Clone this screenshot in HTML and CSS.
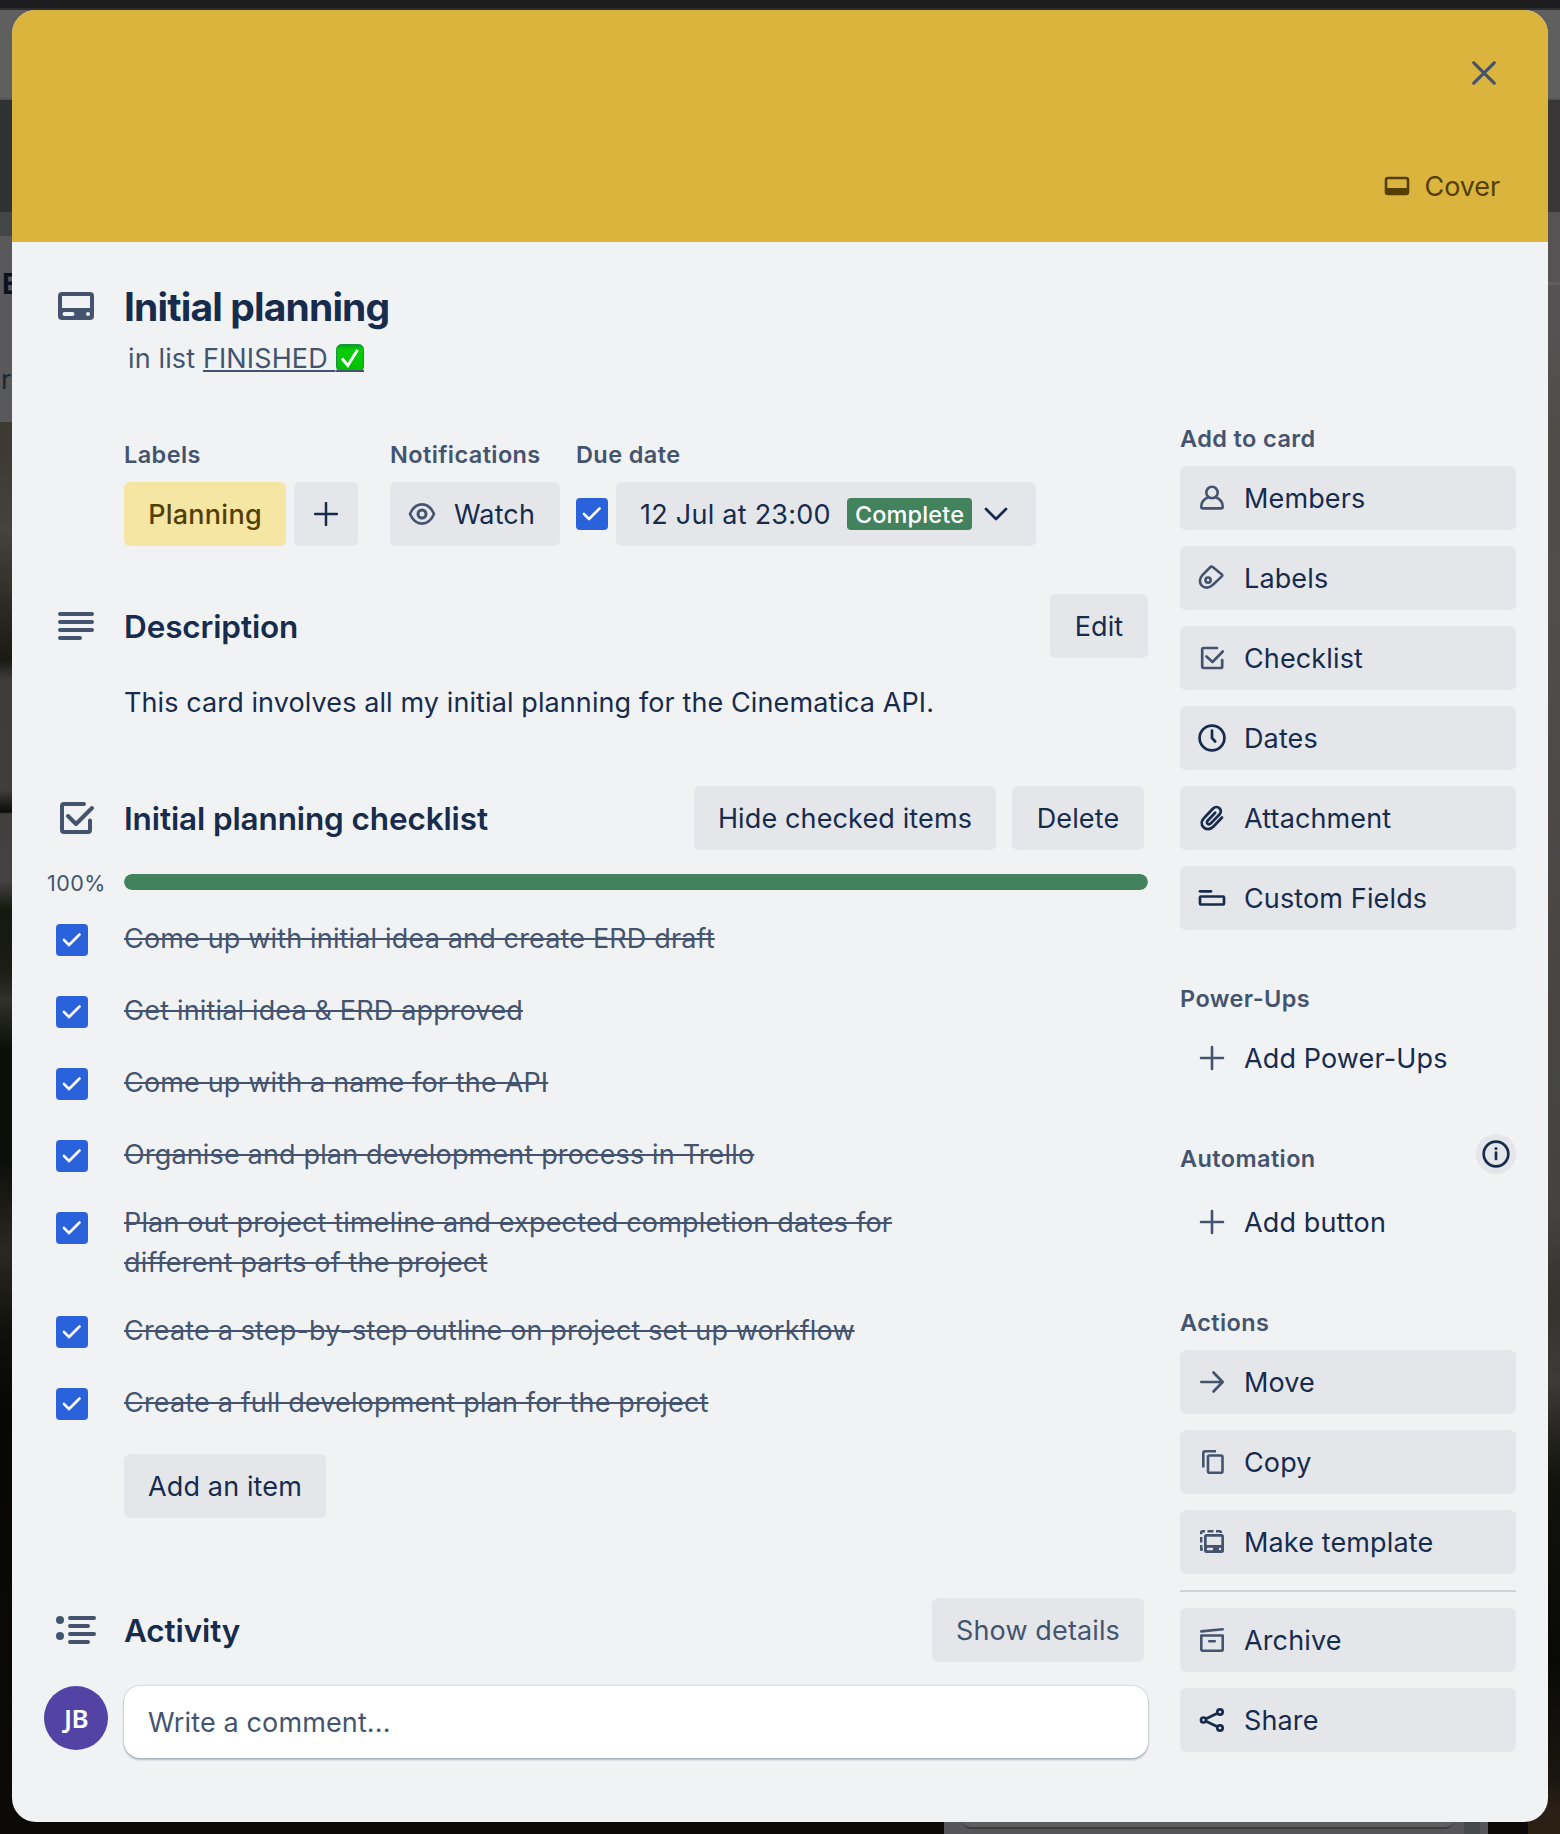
FILE: index.html
```html
<!DOCTYPE html>
<html lang="en">
<head>
<meta charset="utf-8">
<title>Initial planning</title>
<link rel="stylesheet" href="styles.css">
</head>
<body>
<div class="backdrop" aria-hidden="true">
  <div class="edge edge-left"><span class="peek peek-title">E</span><span class="peek peek-row">re</span></div>
  <div class="edge edge-right"></div>
  <div class="edge-bottom"><div class="behind-list"><div class="behind-card"></div><div class="behind-scroll"></div></div></div>
</div>
<main class="card">
  <header class="cover">
    <button class="close" aria-label="Close"><svg width="24" height="24" viewBox="0 0 24 24"><path d="M1.800 1.800l20.400 20.400M22.200 1.800l-20.400 20.400" stroke="#44546f" stroke-width="3.200" stroke-linecap="round"/></svg></button>
    <button class="cover-btn"><svg width="26" height="20" viewBox="0 0 26 20"><rect x="2" y="2" width="22" height="16" rx="2" fill="none" stroke="#533f04" stroke-width="2.600"/><path d="M2 12h22v6H2z" fill="#533f04"/></svg><span>Cover</span></button>
  </header>

  <section class="title-row">
    <svg class="title-icon" width="36" height="28" viewBox="0 0 36 28"><path fill="#44546f" fill-rule="evenodd" d="M4 0h28a4 4 0 0 1 4 4v20a4 4 0 0 1-4 4H4a4 4 0 0 1-4-4V4a4 4 0 0 1 4-4zM4 4v12h28V4zM6.500 20a2 2 0 0 0 0 4h8a2 2 0 0 0 0-4zM30 20a2 2 0 1 0 0 4a2 2 0 0 0 0-4z"/></svg>
    <div>
      <h1>Initial planning</h1>
      <p class="in-list">in list <a>FINISHED <svg class="tick-emoji" width="28" height="28" viewBox="0 0 28 28"><defs><linearGradient id="g" x1="0" y1="0" x2="0" y2="1"><stop offset="0" stop-color="#0b9d25"/><stop offset=".2" stop-color="#05cf05"/><stop offset="1" stop-color="#04bd04"/></linearGradient></defs><rect x=".5" y=".5" width="27" height="27" rx="5" fill="url(#g)" stroke="#16943a"/><path d="M6 14.500l5.800 7L21.500 6" fill="none" stroke="#fff" stroke-width="3"/><path d="M0 27h28" stroke="#44546f" stroke-width="2"/></svg></a></p>
    </div>
  </section>

  <div class="columns">
    <div class="main">
      <div class="details">
        <div class="field f-labels"><h3>Labels</h3><div class="row"><span class="btn label">Planning</span><button class="btn plus" aria-label="Add label"><svg width="24" height="24" viewBox="0 0 24 24"><path d="M12 1v22M1 12h22" stroke="#172b4d" stroke-width="2.500" stroke-linecap="round"/></svg></button></div></div>
        <div class="field f-watch"><h3>Notifications</h3><button class="btn watch"><svg width="28" height="24" viewBox="0 0 28 24" fill="none" stroke="#44546f"><path d="M2 12C5 5 9.500 2.400 14 2.400S23 5 26 12C23 19 18.500 21.600 14 21.600S5 19 2 12z" stroke-width="2.600" stroke-linejoin="round"/><circle cx="14" cy="12" r="4" stroke-width="3"/></svg><span>Watch</span></button></div>
        <div class="field"><h3>Due date</h3><div class="row"><span class="check"><svg width="20" height="16" viewBox="0 0 20 16"><path d="M2 8l5 5L17.500 2.500" /></svg></span><button class="btn date"><span class="date-text">12 Jul at 23:00</span><span class="badge">Complete</span><svg width="24" height="16" viewBox="0 0 24 16"><path d="M2 3l10 10L22 3" fill="none" stroke="#172b4d" stroke-width="2.800" stroke-linecap="round" stroke-linejoin="round"/></svg></button></div></div>
      </div>

      <section class="description">
        <div class="section-head"><svg class="sec-icon" width="40" height="28" viewBox="0 0 40 28"><path d="M4 2h32M4 10h32M4 18h32M4 26h20" stroke="#44546f" stroke-width="4" stroke-linecap="round"/></svg><h2>Description</h2><button class="btn edit">Edit</button></div>
        <p class="desc-text">This card involves all my initial planning for the Cinematica API.</p>
      </section>

      <section class="checklist">
        <div class="section-head"><svg class="sec-icon" width="40" height="36" viewBox="0 0 40 36" fill="none" stroke="#44546f" stroke-width="4" stroke-linecap="round" stroke-linejoin="round"><path d="M28 4H8a2 2 0 0 0-2 2v24a2 2 0 0 0 2 2h24a2 2 0 0 0 2-2V20.500"/><path d="M12 16l8 8L36 8"/></svg><h2>Initial planning checklist</h2><button class="btn hide">Hide checked items</button><button class="btn delete">Delete</button></div>
        <div class="progress"><span>100%</span><div class="bar"><div class="bar-fill" style="width:100%"></div></div></div>
        <ul class="items">
          <li><span class="check"><svg width="20" height="16" viewBox="0 0 20 16"><path d="M2 8l5 5L17.500 2.500"/></svg></span><s>Come up with initial idea and create ERD draft</s></li>
          <li><span class="check"><svg width="20" height="16" viewBox="0 0 20 16"><path d="M2 8l5 5L17.500 2.500"/></svg></span><s>Get initial idea &amp; ERD approved</s></li>
          <li><span class="check"><svg width="20" height="16" viewBox="0 0 20 16"><path d="M2 8l5 5L17.500 2.500"/></svg></span><s>Come up with a name for the API</s></li>
          <li><span class="check"><svg width="20" height="16" viewBox="0 0 20 16"><path d="M2 8l5 5L17.500 2.500"/></svg></span><s>Organise and plan development process in Trello</s></li>
          <li class="two-line"><span class="check"><svg width="20" height="16" viewBox="0 0 20 16"><path d="M2 8l5 5L17.500 2.500"/></svg></span><s>Plan out project timeline and expected completion dates for<br>different parts of the project</s></li>
          <li><span class="check"><svg width="20" height="16" viewBox="0 0 20 16"><path d="M2 8l5 5L17.500 2.500"/></svg></span><s>Create a step-by-step outline on project set up workflow</s></li>
          <li><span class="check"><svg width="20" height="16" viewBox="0 0 20 16"><path d="M2 8l5 5L17.500 2.500"/></svg></span><s>Create a full development plan for the project</s></li>
        </ul>
        <button class="btn add-item">Add an item</button>
      </section>

      <section class="activity">
        <div class="section-head"><svg class="sec-icon" width="40" height="28" viewBox="0 0 40 28"><path d="M14 2h24M14 10h18M14 18h24M14 26h18" stroke="#44546f" stroke-width="4" stroke-linecap="round"/><circle cx="4" cy="4" r="4" fill="#44546f"/><circle cx="4" cy="20" r="4" fill="#44546f"/></svg><h2>Activity</h2><button class="btn details-btn">Show details</button></div>
        <div class="comment"><span class="avatar">JB</span><div class="comment-box">Write a comment...</div></div>
      </section>
    </div>

    <aside class="side">
      <h3>Add to card</h3>
      <div class="stack">
        <button class="btn side-btn"><svg width="32" height="32" viewBox="0 0 32 32" fill="none" stroke="#44546f" stroke-width="2.600" stroke-linejoin="round"><circle cx="16" cy="10.500" r="5.700"/><path d="M12.500 15.200C8 16.800 5.300 20 5.300 24.500c0 1.300.4 1.900 1.500 1.900h18.400c1.100 0 1.500-.6 1.500-1.900c0-4.500-2.700-7.700-7.200-9.300"/></svg><span>Members</span></button>
        <button class="btn side-btn"><svg width="32" height="32" viewBox="0 0 32 32" fill="none" stroke="#44546f" stroke-width="2.800" stroke-linejoin="round"><g transform="translate(.9 .9) scale(.93)"><path d="M14.300 4.700L6.200 12.800c-4 4-3.600 9-.9 11.700s8 3 11.700-.8l9.800-9.200c.8-.8.7-1.400 0-2.100L17 4.500c-.9-.8-1.800-.7-2.700.2z"/><circle cx="12" cy="18.500" r="2.800"/></g></svg><span>Labels</span></button>
        <button class="btn side-btn"><svg width="32" height="32" viewBox="0 0 32 32" fill="none" stroke="#44546f" stroke-width="2.700" stroke-linecap="round" stroke-linejoin="round"><path d="M21 6H7.400a1.200 1.200 0 0 0-1.200 1.200V24.800a1.200 1.200 0 0 0 1.200 1.200H25a1.200 1.200 0 0 0 1.200-1.200V18"/><path d="M10.500 14.500l6 5.500L26.800 9.500"/></svg><span>Checklist</span></button>
        <button class="btn side-btn"><svg width="32" height="32" viewBox="0 0 32 32" fill="none" stroke="#172b4d" stroke-width="2.700" stroke-linecap="round"><circle cx="16" cy="16" r="12.400"/><path d="M16 8.500V16l3.200 3.500"/></svg><span>Dates</span></button>
        <button class="btn side-btn"><svg width="32" height="32" viewBox="0 0 32 32" fill="none" stroke="#172b4d" stroke-width="2.700" stroke-linecap="round" stroke-linejoin="round"><path d="M26 15.500l-8.500 9c-3.300 3.400-7.500 3.300-10 .8s-2.400-6.300.8-9.500l8.500-9c2.300-2.300 5-2.100 6.700-.5s1.800 4.300-.3 6.500l-8.400 8.600c-1.100 1.100-2.300 1.100-3.200.3s-.9-2.100.2-3.200l7.400-7.700"/></svg><span>Attachment</span></button>
        <button class="btn side-btn"><svg width="32" height="32" viewBox="0 0 32 32" fill="none" stroke="#172b4d" stroke-width="2.700" stroke-linecap="round"><path d="M4 9.300h11"/><rect x="4" y="14.500" width="24" height="8" rx="1"/></svg><span>Custom Fields</span></button>
      </div>
      <h3 class="h-power">Power-Ups</h3>
      <button class="btn side-btn plain"><svg width="32" height="32" viewBox="0 0 32 32"><path d="M16 5v22M5 16h22" stroke="#44546f" stroke-width="2.600" stroke-linecap="round"/></svg><span>Add Power-Ups</span></button>
      <div class="auto-head"><h3>Automation</h3><span class="info"><svg width="28" height="28" viewBox="0 0 28 28" fill="none" stroke="#172b4d" stroke-width="2.700"><circle cx="14" cy="14" r="12.300"/><path d="M14 12.500v6.500" stroke-linecap="round"/><circle cx="14" cy="8.600" r="1.500" fill="#172b4d" stroke="none"/></svg></span></div>
      <button class="btn side-btn plain"><svg width="32" height="32" viewBox="0 0 32 32"><path d="M16 5v22M5 16h22" stroke="#44546f" stroke-width="2.600" stroke-linecap="round"/></svg><span>Add button</span></button>
      <h3 class="h-actions">Actions</h3>
      <div class="stack">
        <button class="btn side-btn"><svg width="32" height="32" viewBox="0 0 32 32" fill="none" stroke="#44546f" stroke-width="2.700" stroke-linecap="round" stroke-linejoin="round"><path d="M5.300 16H26.500M17.500 6.500L26.700 16l-9.200 9.500"/></svg><span>Move</span></button>
        <button class="btn side-btn"><svg width="32" height="32" viewBox="0 0 32 32" fill="none" stroke="#44546f" stroke-width="2.600"><path d="M20 5.300H9.300a2 2 0 0 0-2 2V21.500"/><rect x="12" y="9.500" width="14.500" height="17.200" rx="1.500"/></svg><span>Copy</span></button>
        <button class="btn side-btn"><svg width="32" height="32" viewBox="0 0 32 32"><path fill="none" stroke="#44546f" stroke-width="2.400" d="M5.200 8.200V6.500a1.300 1.300 0 0 1 1.300-1.300H9M11.500 5.200h6M20 5.200h3.500q1.500 0 1.500 1.800M5.200 11v5.500M5.200 19v4.500H7"/><path fill="#44546f" fill-rule="evenodd" d="M10.500 8h15A2.500 2.500 0 0 1 28 10.500v14a2.500 2.500 0 0 1-2.500 2.500h-15A2.500 2.500 0 0 1 8 24.500v-14A2.500 2.500 0 0 1 10.500 8zM10.700 10.700V19H25.300V10.700zM12 21.800a1.200 1.200 0 0 0 0 2.400h4a1.200 1.200 0 0 0 0-2.400zM24 21.800a1.200 1.200 0 1 0 0 2.400a1.200 1.200 0 0 0 0-2.400z"/></svg><span>Make template</span></button>
        <hr>
        <button class="btn side-btn"><svg width="32" height="32" viewBox="0 0 32 32" fill="none" stroke="#44546f" stroke-width="2.600" stroke-linecap="round" stroke-linejoin="round"><path d="M5.300 7.400L26.700 5.300"/><path d="M5.300 11.500H26.700V25.500a1.200 1.200 0 0 1-1.200 1.200h-19a1.200 1.200 0 0 1-1.200-1.200z"/><path d="M13.300 17.300h5.400"/></svg><span>Archive</span></button>
        <button class="btn side-btn"><svg width="32" height="32" viewBox="0 0 32 32" fill="none" stroke="#172b4d" stroke-width="2.700"><circle cx="7.500" cy="16" r="2.500"/><circle cx="24" cy="8" r="2.700"/><circle cx="24" cy="24" r="2.700"/><path d="M10 14.800L21.500 9.300M10 17.200l11.500 5.500"/></svg><span>Share</span></button>
      </div>
    </aside>
  </div>
</main>
</body>
</html>
```

FILE: styles.css
```css
* { box-sizing: border-box; margin: 0; padding: 0; }
body {
  width: 1560px; height: 1834px; overflow: hidden; position: relative;
  background: #0b0b0a; color: #172b4d;
  font: 27px/40px Inter, "Liberation Sans", sans-serif;
  letter-spacing: 0.13px;
  padding: 10px 12px 12px;
}
button { font: inherit; letter-spacing: inherit; color: inherit; border: 0; background: none; }
svg { display: block; flex: none; }
ul { list-style: none; }

/* dimmed board behind the dialog */
.backdrop { position: absolute; inset: 0; background: linear-gradient(#1d1d1f 8px, #2c2d2f 8px 10px, transparent 10px); }
.edge { position: absolute; top: 10px; width: 32px; bottom: 0; overflow: hidden; }
.edge-left { left: 0; background: linear-gradient(#5f5f5f 0 88px, #535556 88px 90px, #2f3233 90px 202px, #444748 202px 226px, #59585a 226px 412px, #3d3a33 412px 440px, #45433f 520px, #2b2a22 600px, #1a1a14 650px, #3f3d3c 670px, #403d3d 780px, #0f100d 800px 802px, #413e3e 804px, #454243 870px, #16190f 900px, #1b1c14 960px, #30302c 990px, #0c0e0a 1040px, #0d0e0b 1150px, #2b2823 1240px, #10110d 1320px, #070706 1400px, #0b0a09 100%); }
.edge-right { right: 0; background: linear-gradient(#5f5f5f 0 88px, #535556 88px 90px, #3a3738 90px 202px, #555354 202px 272px, #605e5e 272px 275px, #555253 275px 320px, #4e4d4a 420px, #504e4d 600px, #484543 950px, #454342 1200px, #35332d 1290px, #3d3b38 1370px, #12130d 1470px, #080907 1650px, #1b1710 1770px, #2a2017 1800px, #2a1f12 100%); }
.peek { position: absolute; left: 2px; color: #0b1222; font-weight: 700; line-height: 30px; }
.peek-title { top: 259px; font-size: 28px; }
.peek-row { top: 355px; left: 1px; color: #1d2533; font-weight: 400; }
.edge-bottom { position: absolute; left: 32px; right: 32px; bottom: 0; height: 14px; background: #0b0a09; }
.behind-list { display: flex; width: 544px; height: 14px; margin-left: 912px; background: #565557; }
.behind-card { width: 492px; height: 9px; margin-left: 18px; background: #5f5e5f; border-bottom: 2px solid #3e3e40; border-radius: 0 0 16px 16px; }
.behind-scroll { width: 16px; height: 14px; margin-left: 10px; background: #47484a; }

.card { position: relative; width: 1536px; height: 1812px; background: #f1f2f4; border-radius: 24px; overflow: hidden; }
.cover { height: 232px; background: #dab43d; display: flex; flex-direction: column; align-items: flex-end; padding: 51px 48px 0 0; }
.close { padding-right: 4px; }
.cover-btn { display: flex; align-items: center; gap: 15px; margin-top: 80px; color: #533f04; letter-spacing: -0.1px; }
.cover-btn span { padding-top: 2px; }
.title-row { display: flex; padding: 32px 0 0 46px; height: 176px; }
.title-icon { margin: 18px 30px 0 0; }
h1 { font-size: 39px; line-height: 64px; padding-top: 1px; font-weight: 650; letter-spacing: -0.85px; }
.in-list { color: #44546f; padding-left: 4px; line-height: 40px; }
.in-list a { text-decoration: underline; text-decoration-thickness: 2px; text-underline-offset: 2px; }
.tick-emoji { display: inline-block; vertical-align: -4px; }

.columns { display: flex; gap: 32px; padding-left: 32px; }
.main { width: 1104px; }
h2 { font-size: 31.500px; font-weight: 620; letter-spacing: -0.12px; padding-top: 2px; }
h3 { font-size: 23.500px; line-height: 28px; font-weight: 600; color: #44546f; letter-spacing: 0.4px; }
.btn { display: flex; align-items: center; height: 64px; border-radius: 6px; background: #e4e6ea; white-space: nowrap; justify-content: center; padding-top: 2px; }
.btn svg { margin-top: -2px; }
.row { display: flex; gap: 8px; align-items: center; }
.details { display: flex; padding: 23px 0 0 80px; height: 148px; }
.field h3 { margin-bottom: 13px; }
.f-labels { width: 266px; }
.f-watch { width: 186px; }
.label { width: 162px; background: #f5e6a3; color: #533f04; font-weight: 500; letter-spacing: 0.25px; }
.plus { width: 64px; }
.watch { width: 170px; justify-content: flex-start; padding-left: 18px; gap: 18px; }
.check { width: 32px; height: 32px; border-radius: 4px; background: #2a62db; display: flex; align-items: center; justify-content: center; flex: none; }
.check path { fill: none; stroke: #fff; stroke-width: 2.600; stroke-linecap: round; stroke-linejoin: round; }
.date { width: 420px; justify-content: flex-start; padding-left: 24px; }
.date-text { width: 207px; text-align: left; letter-spacing: 0.25px; }
.badge { background: #42825c; color: #fff; font-size: 23.500px; line-height: 30px; padding-top: 2px; margin-top: -2px; width: 125px; border-radius: 4px; text-align: center; margin-right: 12px; font-weight: 450; }

.section-head { display: grid; grid-template-columns: 80px 1fr auto auto; align-items: center; height: 64px; }
.sec-icon { margin-left: 12px; }
.description { padding-top: 28px; height: 216px; }
.edit { width: 98px; }
.desc-text { padding: 25px 0 0 80px; letter-spacing: 0.1px; }
.checklist { padding-top: 4px; }
.hide { width: 302px; }
.delete { width: 132px; margin: 0 4px 0 16px; }
.progress { display: flex; height: 16px; margin-top: 24px; align-items: center; }
.progress span { width: 80px; padding: 1px 0 0 3px; font-size: 21.500px; letter-spacing: 0.5px; color: #44546f; }
.bar { flex: 1; height: 16px; border-radius: 8px; overflow: hidden; background: #e4e6ea; }
.bar-fill { height: 16px; background: #42825c; border-radius: 8px; }
.items { padding-top: 22px; }
.items li { display: flex; height: 72px; padding: 7px 0 0 12px; }
.items .check { margin: 5px 36px 0 0; }
.items s { color: #44546f; text-decoration-thickness: 2px; white-space: nowrap; letter-spacing: 0.16px; }
.items .two-line { height: 104px; padding-top: 3px; }
.items .two-line .check { margin-top: 9px; }
.add-item { width: 202px; margin: 6px 0 0 80px; }
.activity { padding-top: 80px; }
.details-btn { width: 212px; margin-right: 4px; color: #44546f; }
.comment { display: flex; margin-top: 24px; }
.avatar { width: 64px; height: 64px; border-radius: 50%; background: #5243a5; color: #fff; font: 600 26px/64px "Noto Sans", sans-serif; letter-spacing: -0.5px; text-align: center; margin-right: 16px; }
.comment-box { flex: 1; height: 72px; border-radius: 16px; background: #fff; color: #44546f; line-height: 72px; padding: 1px 0 0 24px; box-shadow: 0 2px 2px #091e4240, 0 0 2px #091e424f; }

.side { width: 336px; padding-top: 6px; }
.side h3 { line-height: 26px; padding-top: 2px; }
.stack { display: flex; flex-direction: column; gap: 16px; margin-top: 14px; }
.side-btn { width: 336px; justify-content: flex-start; padding-left: 16px; gap: 16px; }
.plain { background: none; }
.h-power { margin: 54px 0 14px; }
.auto-head { display: flex; justify-content: space-between; align-items: flex-start; height: 56px; margin-top: 44px; }
.auto-head h3 { margin-top: 10px; }
.info { width: 40px; height: 40px; border-radius: 50%; background: #e4e6ea; display: grid; place-items: center; }
.h-actions { margin-top: 54px; }
hr { border: 0; height: 2px; background: #cfd2d8; }
```
